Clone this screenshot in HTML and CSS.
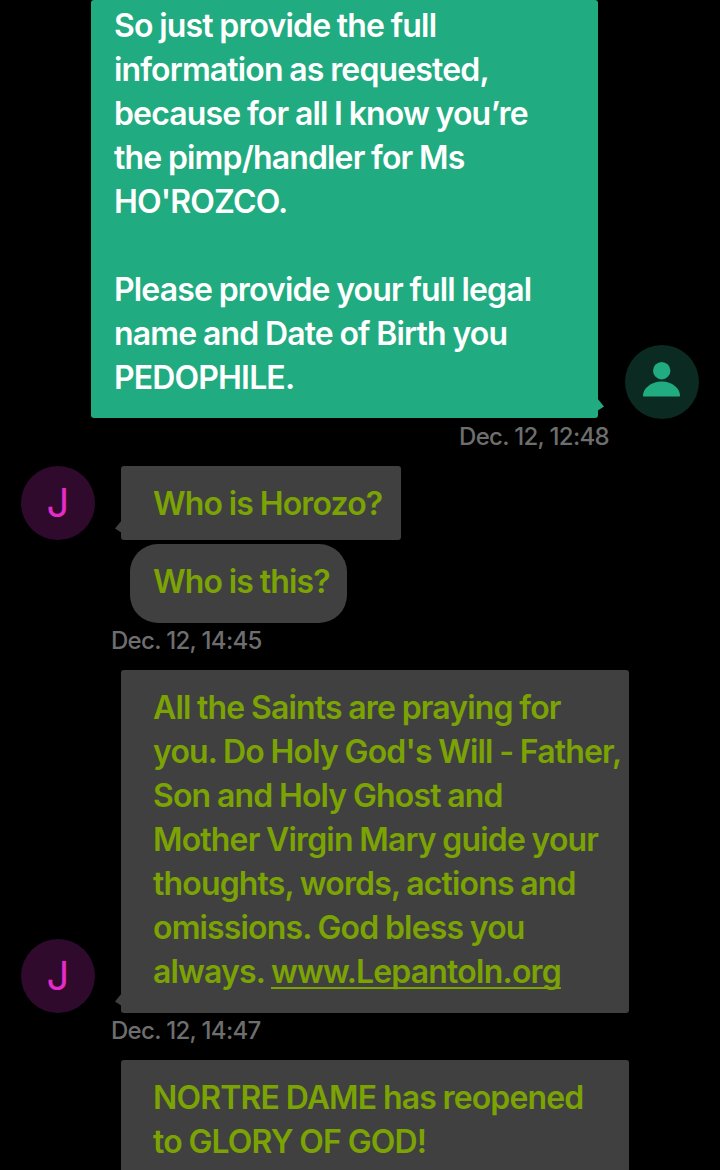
FILE: index.html
```html
<!DOCTYPE html>
<html>
  <head>
    <title>Messages</title>
    <link rel="stylesheet" href="styles.css">
  </head>
  <body>
    <div class="chat">
      <div class="row row-out">
        <div class="bubble bubble-out">
          So just provide the full<br>
          information as requested,<br>
          because for all I know you’re<br>
          the pimp/handler for Ms<br>
          HO'ROZCO.<br>
          <br>
          Please provide your full legal<br>
          name and Date of Birth you<br>
          PEDOPHILE.
        </div>
        <div class="avatar avatar-out">
          <svg width="74" height="74" viewBox="0 0 74 74">
            <circle cx="36.700" cy="25.700" r="8.700" fill="#21ab80"/>
            <path d="M18 50.500c0-7 8-14 18.700-14s18.300 7 18.300 14c0 .6-.4 1-1 1H19c-.6 0-1-.4-1-1z" fill="#21ab80"/>
          </svg>
        </div>
      </div>
      <div class="time time-out">Dec. 12, 12:48</div>

      <div class="row row-in row-first">
        <div class="avatar avatar-in">J</div>
        <div class="bubble bubble-in bubble-short">Who is Horozo?</div>
      </div>
      <div class="bubble-round">Who is this?</div>
      <div class="time time-in">Dec. 12, 14:45</div>

      <div class="row row-in">
        <div class="avatar avatar-in">J</div>
        <div class="bubble bubble-in">
          All the Saints are praying for<br>
          you. Do Holy God's Will - Father,<br>
          Son and Holy Ghost and<br>
          Mother Virgin Mary guide your<br>
          thoughts, words, actions and<br>
          omissions. God bless you<br>
          always. <a class="link" href="#">www.LepantoIn.org</a>
        </div>
      </div>
      <div class="time time-in">Dec. 12, 14:47</div>

      <div class="row row-in">
        <div class="avatar-gap"></div>
        <div class="bubble bubble-in bubble-last">
          NORTRE DAME has reopened<br>
          to GLORY OF GOD!
        </div>
      </div>
    </div>
  </body>
</html>
```

FILE: styles.css
```css
html,
body {
  margin: 0;
  height: 1170px;
  overflow: hidden;
  background: #000;
}

body {
  font-family: Inter, "Noto Sans", sans-serif;
}

.chat {
  display: flex;
  flex-direction: column;
}

.row {
  display: flex;
  align-items: flex-end;
}

.row-out {
  padding-left: 91px;
}

.row-in {
  padding-left: 21px;
}

.row-first {
  margin-top: 12px;
}

.avatar,
.avatar-gap {
  flex: none;
  width: 74px;
  height: 74px;
}

.avatar {
  border-radius: 50%;
  display: flex;
  align-items: center;
  justify-content: center;
}

.avatar-out {
  margin-left: 27px;
  margin-bottom: -1px;
  background: #0b2a22;
}

.avatar-in {
  background: #2f0a2c;
  color: #e62bc8;
  font-size: 40px;
  font-weight: 400;
  line-height: 74px;
}

.bubble,
.bubble-round {
  font-size: 32px;
  font-weight: 600;
  line-height: 44px;
  letter-spacing: -0.85px;
  word-spacing: -0.6px;
  white-space: nowrap;
}

.bubble {
  position: relative;
  border-radius: 3px;
}

.bubble::after {
  content: "";
  position: absolute;
  bottom: 7px;
  width: 7px;
  height: 13px;
  background: inherit;
}

.bubble-out {
  width: 507px;
  box-sizing: border-box;
  padding: 4px 20px 18px 23px;
  background: #21ab80;
  color: #fff;
}

.bubble-out::after {
  right: -6px;
  clip-path: polygon(0 0, 100% 65%, 0 100%);
}

.bubble-in {
  width: 508px;
  box-sizing: border-box;
  margin-left: 26px;
  padding: 16px 15px 19px 32px;
  background: #404040;
  color: #7ba304;
}

.bubble-in::after {
  left: -6px;
  clip-path: polygon(100% 0, 100% 100%, 0 65%);
}

.bubble-short {
  width: 280px;
  padding-bottom: 14px;
}

.bubble-last {
  height: 130px;
}

.bubble-round {
  align-self: flex-start;
  margin: 4px 0 0 130px;
  padding: 16px 17px 19px 23px;
  border-radius: 28px;
  background: #404040;
  color: #7ba304;
}

.link {
  color: inherit;
  text-decoration: underline;
  text-decoration-thickness: 2px;
  text-underline-offset: 4px;
  text-decoration-skip-ink: none;
}

.time {
  margin-top: 1px;
  font-size: 24px;
  font-weight: 500;
  line-height: 34px;
  letter-spacing: -0.7px;
  color: #6e6e6e;
}

.time-out {
  align-self: flex-end;
  margin-top: 2px;
  margin-right: 111px;
}

.time-in {
  margin-bottom: 12px;
  margin-left: 111px;
}
```
